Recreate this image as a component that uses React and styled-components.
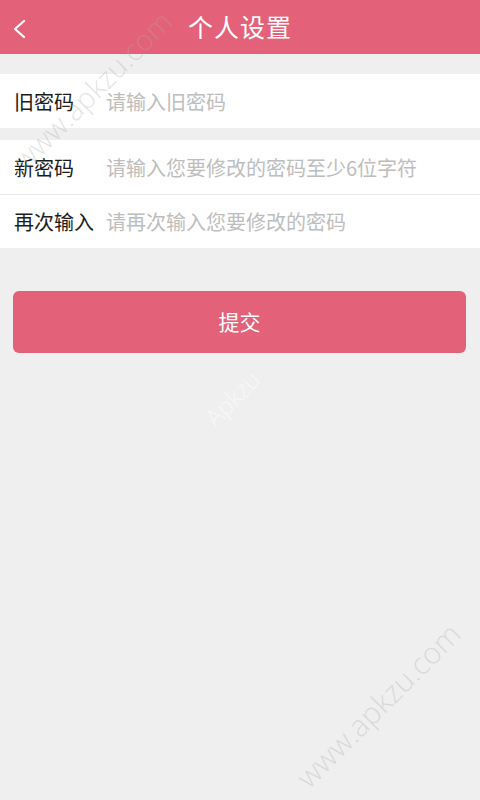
import React from 'react'
import styled, { createGlobalStyle } from 'styled-components'

const GlobalStyle = createGlobalStyle`
  body {
    margin: 0;
    background: #efefef;
    font-family: "Noto Sans CJK SC", "Noto Sans", sans-serif;
  }
`

const PINK = '#e3627a'

const fields = [
  { label: '旧密码', placeholder: '请输入旧密码', group: 0 },
  { label: '新密码', placeholder: '请输入您要修改的密码至少6位字符', group: 1 },
  { label: '再次输入', placeholder: '请再次输入您要修改的密码', group: 1 },
]

const App = () => {
  return (
    <Page>
      <GlobalStyle />
      <Header>
        <BackButton aria-label="返回">
          <svg width="16" height="22" viewBox="0 0 16 22">
            <polyline points="13,3 4,11 13,19" fill="none" stroke="#fff" strokeWidth="2.2" strokeLinecap="round" strokeLinejoin="round" />
          </svg>
        </BackButton>
        <Title>个人设置</Title>
        <span />
      </Header>

      <Section $gap={20}>
        {fields.filter(f => f.group === 0).map(f => (
          <Row key={f.label}>
            <Label>{f.label}</Label>
            <Input type="password" placeholder={f.placeholder} />
          </Row>
        ))}
      </Section>

      <Section $gap={12}>
        {fields.filter(f => f.group === 1).map((f, i) => (
          <Row key={f.label} $divider={i > 0}>
            <Label>{f.label}</Label>
            <Input type="password" placeholder={f.placeholder} />
          </Row>
        ))}
      </Section>

      <Submit>提交</Submit>

      <Watermark $x={92} $y={90} $size={29}>www.apkzu.com</Watermark>
      <Watermark $x={378} $y={705} $size={30}>www.apkzu.com</Watermark>
      <Watermark $x={232} $y={398} $size={24} $light>Apkzu</Watermark>
    </Page>
  )
}

export default App

const Page = styled.div`
  position: relative;
  min-height: 800px;
  overflow: hidden;
  background: #efefef;
`

const Header = styled.header`
  display: grid;
  grid-template-columns: 60px 1fr 60px;
  align-items: center;
  height: 54px;
  background: ${PINK};
`

const BackButton = styled.button`
  display: flex;
  align-items: center;
  height: 54px;
  padding: 4px 0 0 11px;
  border: none;
  background: none;
  cursor: pointer;
`

const Title = styled.h1`
  margin: 0 0 2px;
  text-align: center;
  color: #fff;
  font-size: 25px;
  font-weight: 400;
  letter-spacing: 1px;
`

const Section = styled.section`
  margin-top: ${p => p.$gap}px;
  background: #fff;
`

const Row = styled.label`
  display: flex;
  align-items: center;
  height: 54px;
  padding: 0 0 0 14px;
  box-sizing: border-box;
  border-top: ${p => (p.$divider ? '1px solid #e8e8e8' : 'none')};
`

const Label = styled.span`
  width: 92px;
  flex-shrink: 0;
  font-size: 20px;
  color: #1c1c1c;
`

const Input = styled.input`
  flex: 1;
  min-width: 0;
  border: none;
  outline: none;
  padding: 0;
  background: transparent;
  font-family: inherit;
  font-size: 20px;
  color: #333;

  &::placeholder {
    color: #bdbdbd;
  }
`

const Submit = styled.button`
  display: block;
  width: calc(100% - 27px);
  height: 62px;
  margin: 43px 0 0 13px;
  padding-bottom: 3px;
  border: none;
  border-radius: 6px;
  background: ${PINK};
  color: #fff;
  font-family: inherit;
  font-size: 21px;
  cursor: pointer;
`

const Watermark = styled.div`
  position: absolute;
  left: ${p => p.$x}px;
  top: ${p => p.$y}px;
  transform: translate(-50%, -50%) rotate(-45deg);
  font-family: "Open Sans", "Liberation Sans", sans-serif;
  font-size: ${p => p.$size}px;
  font-weight: 300;
  white-space: nowrap;
  pointer-events: none;
  color: ${p => (p.$light ? 'rgba(255,255,255,0.55)' : 'rgba(170,170,170,0.32)')};
`
